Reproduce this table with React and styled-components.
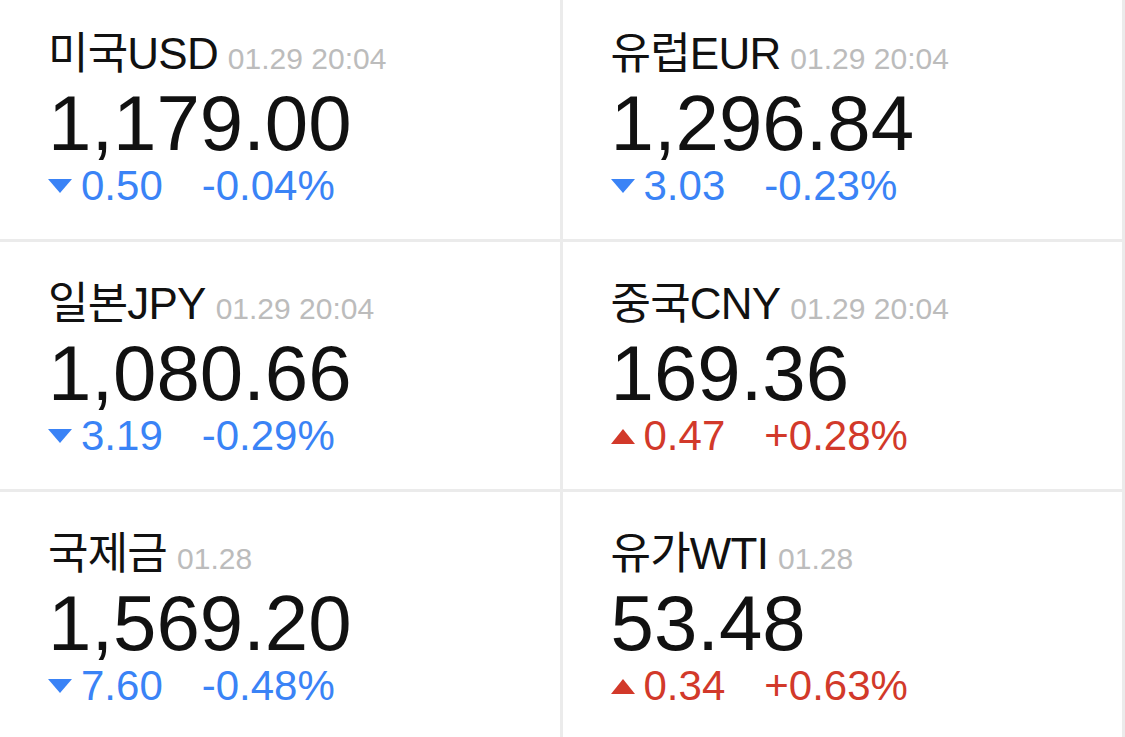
import React from 'react';
import styled, { createGlobalStyle } from 'styled-components';

const GlobalStyle = createGlobalStyle`
    html, body {
        margin: 0;
        padding: 0;
        background: #ffffff;
        overflow: hidden;
    }
    * {
        box-sizing: border-box;
    }
`;

const rates = [
    { id: 'usd', name: '미국USD', time: '01.29 20:04', price: '1,179.00', diff: '0.50', rate: '-0.04%', up: false },
    { id: 'eur', name: '유럽EUR', time: '01.29 20:04', price: '1,296.84', diff: '3.03', rate: '-0.23%', up: false },
    { id: 'jpy', name: '일본JPY', time: '01.29 20:04', price: '1,080.66', diff: '3.19', rate: '-0.29%', up: false },
    { id: 'cny', name: '중국CNY', time: '01.29 20:04', price: '169.36', diff: '0.47', rate: '+0.28%', up: true },
    { id: 'gold', name: '국제금', time: '01.28', price: '1,569.20', diff: '7.60', rate: '-0.48%', up: false },
    { id: 'wti', name: '유가WTI', time: '01.28', price: '53.48', diff: '0.34', rate: '+0.63%', up: true },
];

// the screenshot is scrolled a little, first row is cut at the top
const Page = styled.div`
    margin-top: -8px;
    font-family: 'Liberation Sans', 'Noto Sans CJK KR', sans-serif;
`;

const Grid = styled.div`
    display: grid;
    grid-template-columns: 1fr 1fr;
`;

const Cell = styled.div`
    height: 250px;
    padding: 39px 0 0 48px;
    background: #ffffff;
    border-right: 3px solid #ebebeb;
    border-bottom: 3px solid #ebebeb;
`;

const TitleRow = styled.div`
    display: flex;
    align-items: baseline;
    gap: 10px;
    height: 45px;
`;

const Name = styled.span`
    font-size: 44px;
    line-height: 45px;
    color: #111111;
    letter-spacing: -0.8px;
`;

const Time = styled.span`
    font-size: 30px;
    line-height: 30px;
    color: #bcbcbc;
`;

const Price = styled.div`
    margin-top: 8px;
    font-size: 78px;
    line-height: 78px;
    color: #111111;
`;

const ChangeRow = styled.div`
    display: flex;
    align-items: center;
    margin-top: 3px;
    height: 42px;
    font-size: 42px;
    line-height: 42px;
    color: ${p => (p.$up ? '#d2392a' : '#3a83f6')};
`;

const Arrow = styled.span`
    width: 0;
    height: 0;
    margin-right: 9px;
    border-left: 12px solid transparent;
    border-right: 12px solid transparent;
    ${p =>
        p.$up
            ? 'border-bottom: 15px solid currentColor;'
            : 'border-top: 14px solid currentColor;'}
`;

const Rate = styled.span`
    margin-left: 39px;
`;

const RateCell = ({ item }) => (
    <Cell>
        <TitleRow>
            <Name>{item.name}</Name>
            <Time>{item.time}</Time>
        </TitleRow>
        <Price>{item.price}</Price>
        <ChangeRow $up={item.up}>
            <Arrow $up={item.up} />
            <span>{item.diff}</span>
            <Rate>{item.rate}</Rate>
        </ChangeRow>
    </Cell>
);

const App = () => (
    <Page>
        <GlobalStyle />
        <Grid>
            {rates.map(item => (
                <RateCell key={item.id} item={item} />
            ))}
        </Grid>
    </Page>
);

export default App;
